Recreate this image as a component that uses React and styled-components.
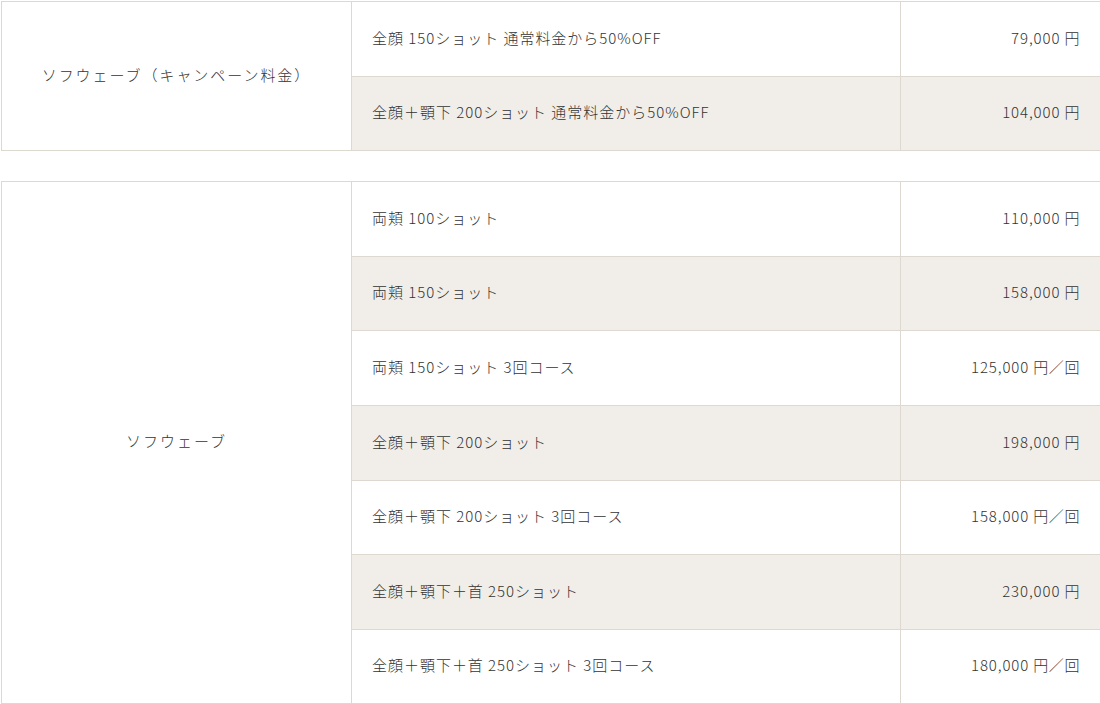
import React from "react";
import styled, { createGlobalStyle } from "styled-components";

const GlobalStyle = createGlobalStyle`
  html, body {
    margin: 0;
    padding: 0;
    background: #fff;
    overflow: hidden;
  }
  body {
    font-family: "Noto Sans CJK JP", "Noto Sans", sans-serif;
    color: #333;
  }
`;

const plans = [
  {
    name: "ソフウェーブ（キャンペーン料金）",
    rows: [
      { label: "全顔 150ショット 通常料金から50%OFF", price: "79,000", unit: "円" },
      { label: "全顔＋顎下 200ショット 通常料金から50%OFF", price: "104,000", unit: "円" },
    ],
  },
  {
    name: "ソフウェーブ",
    rows: [
      { label: "両頬 100ショット", price: "110,000", unit: "円" },
      { label: "両頬 150ショット", price: "158,000", unit: "円" },
      { label: "両頬 150ショット 3回コース", price: "125,000", unit: "円／回" },
      { label: "全顔＋顎下 200ショット", price: "198,000", unit: "円" },
      { label: "全顔＋顎下 200ショット 3回コース", price: "158,000", unit: "円／回" },
      { label: "全顔＋顎下＋首 250ショット", price: "230,000", unit: "円" },
      { label: "全顔＋顎下＋首 250ショット 3回コース", price: "180,000", unit: "円／回" },
    ],
  },
];

const Page = styled.div`
  padding: 1px 0 0 1px;
  display: flex;
  flex-direction: column;
  gap: 30px;
`;

const Table = styled.table`
  width: 1100px;
  border-collapse: collapse;
  table-layout: fixed;
  font-size: 15px;
  font-weight: 300;
  line-height: 24px;
  letter-spacing: 0.065em;
`;

const Cell = styled.td`
  box-sizing: border-box;
  border: 1px solid #ddd8d0;
  padding: 23.6px 20px 26px 20px;
  background: ${(p) => (p.$shaded ? "#f1eee9" : "#fff")};
  vertical-align: middle;
  white-space: nowrap;
`;

const NameCell = styled(Cell)`
  width: 350px;
  text-align: center;
  letter-spacing: 0.13em;
  padding: 0 10px 3px;
`;

const LabelCell = styled(Cell)`
  width: 549px;
`;

const PriceCell = styled(Cell)`
  text-align: right;
  letter-spacing: 0.06em;
`;

const Unit = styled.span`
  margin-left: 4px;
  letter-spacing: 0.04em;
`;

export default function App() {
  return (
    <>
      <GlobalStyle />
      <Page>
        {plans.map((plan) => (
          <Table key={plan.name}>
            <tbody>
              {plan.rows.map((row, i) => (
                <tr key={row.label}>
                  {i === 0 && <NameCell rowSpan={plan.rows.length}>{plan.name}</NameCell>}
                  <LabelCell $shaded={i % 2 === 1}>{row.label}</LabelCell>
                  <PriceCell $shaded={i % 2 === 1}>
                    {row.price}
                    <Unit>{row.unit}</Unit>
                  </PriceCell>
                </tr>
              ))}
            </tbody>
          </Table>
        ))}
      </Page>
    </>
  );
}
